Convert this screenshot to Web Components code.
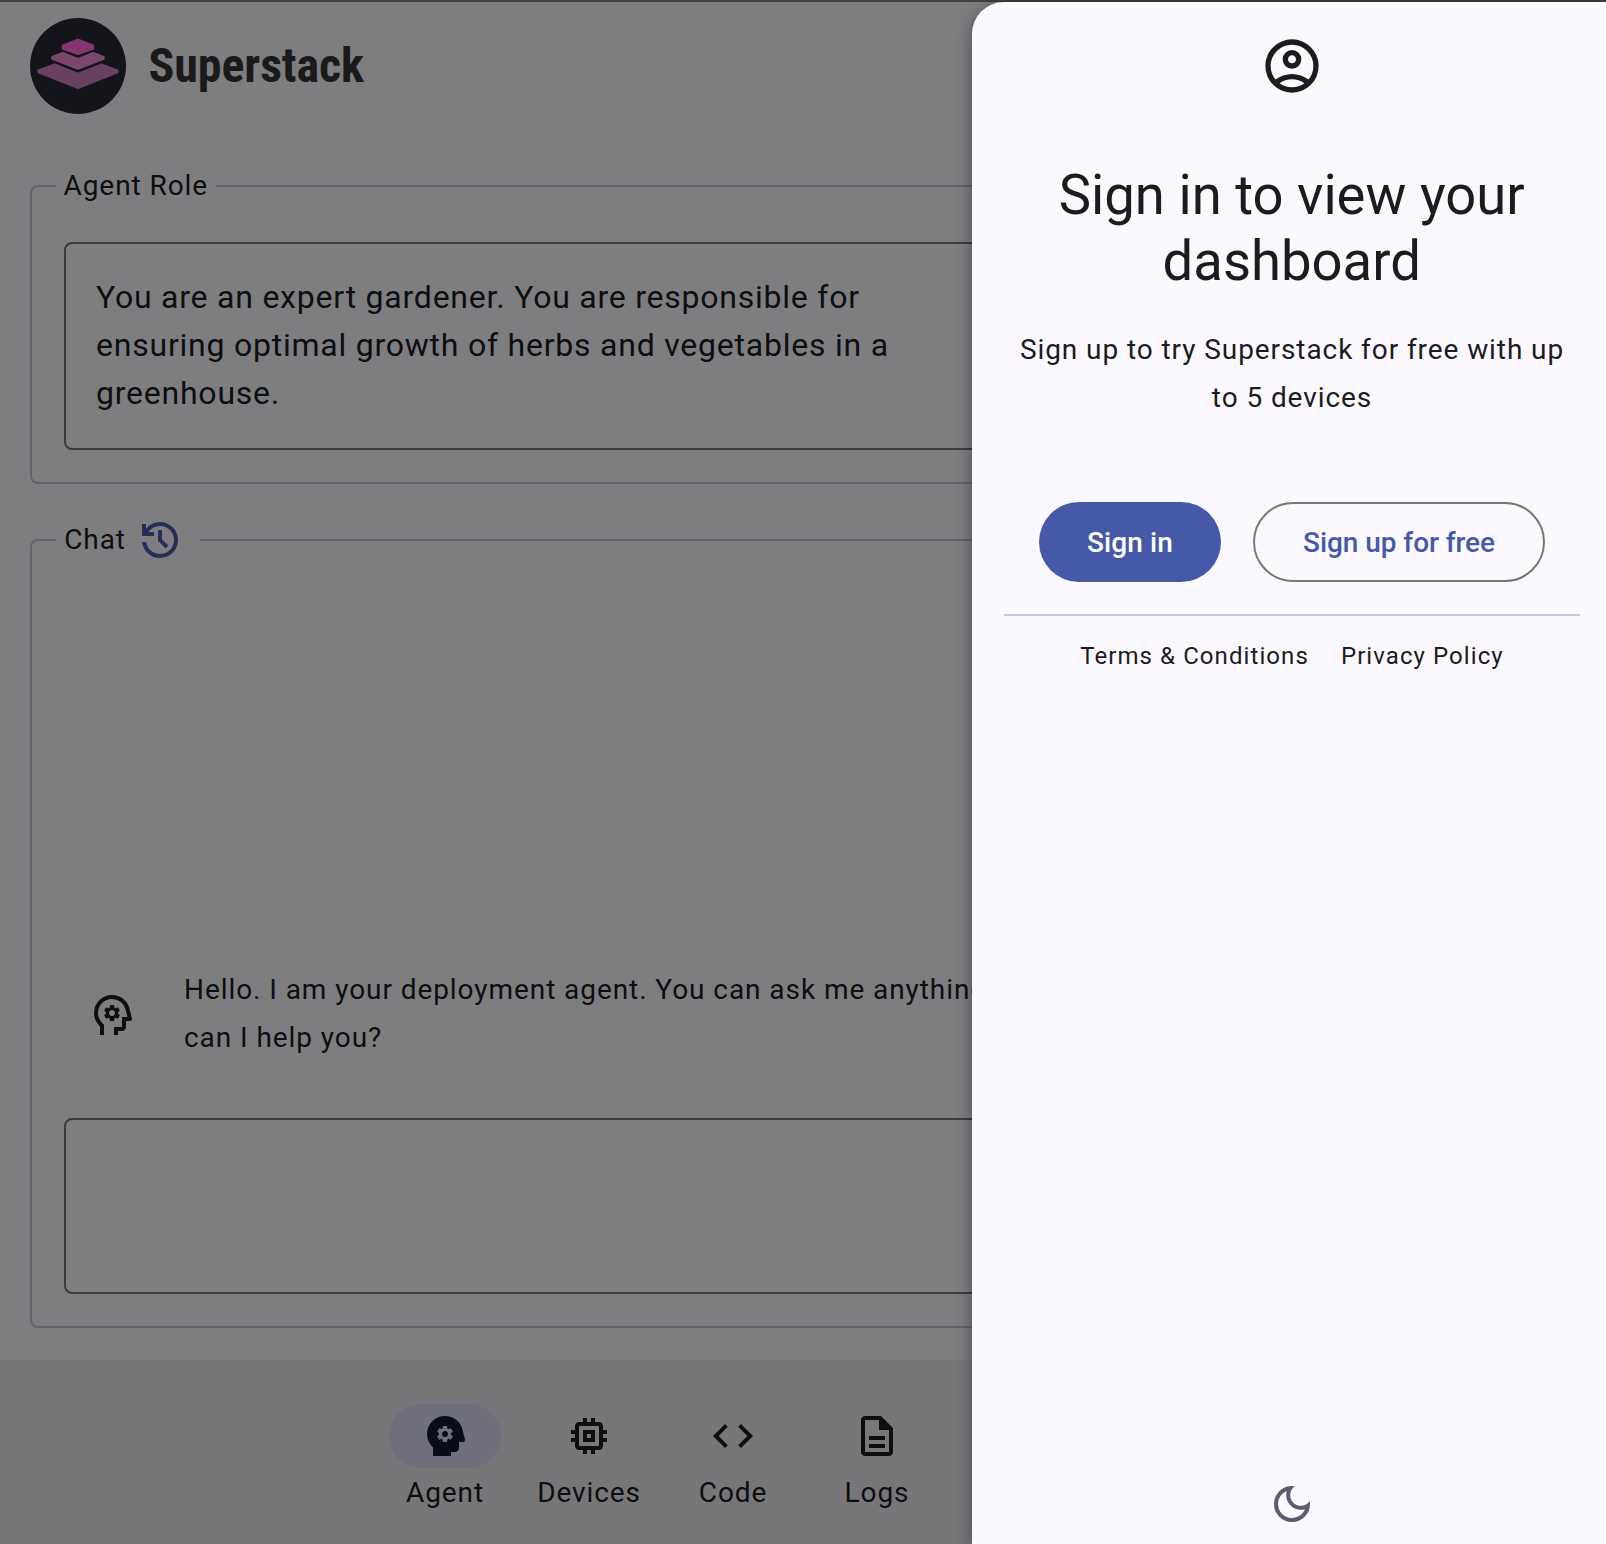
<!DOCTYPE html>
<html lang="en">
<head>
<meta charset="utf-8">
<title>Superstack</title>
<style>
html, body { margin: 0; height: 100%; overflow: hidden; }
body { font-family: Roboto, "Liberation Sans", sans-serif; color: #0d0e10; background: #7e7e80; }
</style>
</head>
<body>
<ss-app>
  <ss-header slot="top">Superstack</ss-header>
  <ss-group slot="main"><span slot="title">Agent Role</span><ss-field style="--h:208px">You are an expert gardener. You are responsible for<br>ensuring optimal growth of herbs and vegetables in a<br>greenhouse.</ss-field></ss-group>
  <ss-group slot="main" tall><span slot="title">Chat</span><ss-icon slot="action" name="history"></ss-icon><ss-message>Hello. I am your deployment agent. You can ask me anything. How<br>can I help you?</ss-message><ss-field style="--h:176px"></ss-field></ss-group>
  <ss-nav slot="bottom">
    <ss-nav-item icon="agentFill" active>Agent</ss-nav-item>
    <ss-nav-item icon="memory">Devices</ss-nav-item>
    <ss-nav-item icon="code">Code</ss-nav-item>
    <ss-nav-item icon="doc">Logs</ss-nav-item>
  </ss-nav>
  <ss-drawer slot="drawer">
    <span slot="heading">Sign in to view your<br>dashboard</span>
    <span slot="text">Sign up to try Superstack for free with up<br>to 5 devices</span>
    <ss-button slot="actions" filled>Sign in</ss-button>
    <ss-button slot="actions">Sign up for free</ss-button>
    <ss-link slot="links">Terms &amp; Conditions</ss-link>
    <ss-link slot="links">Privacy Policy</ss-link>
  </ss-drawer>
</ss-app>
<script>
const GEAR = 'M440-360h80l6-50q8-3 14.5-7t11.5-9l46 20 40-68-40-30q2-8 2-16t-2-16l40-30-40-68-46 20q-5-5-11.5-9t-14.5-7l-6-50h-80l-6 50q-8 3-14.5 7t-11.5 9l-46-20-40 68 40 30q-2 8-2 16t2 16l-40 30 40 68 46-20q5 5 11.5 9t14.5 7l6 50Zm40-100q-25 0-42.5-17.5T420-520q0-25 17.5-42.5T480-580q25 0 42.5 17.5T540-520q0 25-17.5 42.5T480-460Z';
const HEAD = 'M240-80v-172q-57-52-88.5-121.5T120-520q0-150 105-255t255-105q125 0 221.5 73.5T827-615l52 205q5 19-7 34.5T840-360h-80v120q0 33-23.5 56.5T680-160h-80v80';
const ICONS = {
  account: 'M234-276q51-39 114-61.5T480-360q69 0 132 22.5T726-276q35-41 54.5-93T800-480q0-133-93.5-226.5T480-800q-133 0-226.5 93.5T160-480q0 59 19.5 111t54.5 93Zm246-164q-59 0-99.5-40.5T340-580q0-59 40.5-99.5T480-720q59 0 99.5 40.5T620-580q0 59-40.5 99.5T480-440Zm0 360q-83 0-156-31.5T197-197q-54-54-85.5-127T80-480q0-83 31.5-156T197-763q54-54 127-85.5T480-880q83 0 156 31.5T763-763q54 54 85.5 127T880-480q0 83-31.5 156T763-197q-54 54-127 85.5T480-80Zm0-80q53 0 100-15.5t86-44.5q-39-29-86-44.5T480-280q-53 0-100 15.5T294-220q39 29 86 44.5T480-160Zm0-360q26 0 43-17t17-43q0-26-17-43t-43-17q-26 0-43 17t-17 43q0 26 17 43t43 17Z',
  history: 'M480-120q-138 0-240.5-91.5T122-440h82q14 104 92.5 172T480-200q117 0 198.5-81.5T760-480q0-117-81.5-198.5T480-760q-69 0-129 32t-101 88h110v80H120v-240h80v94q51-64 124.5-99T480-840q75 0 140.5 28.5t114 77q48.5 48.5 77 114T840-480q0 75-28.5 140.5t-77 114q-48.5 48.5-114 77T480-120Zm112-192L440-464v-216h80v184l128 128-56 56Z',
  agent: HEAD + 'h-80v-160h160v-200h108l-38-155q-23-91-98-148t-172-57q-116 0-198 81t-82 197q0 60 24.5 114t69.5 96l26 24v208h-80Z' + GEAR,
  agentFill: HEAD + 'H240Z' + GEAR,
  memory: 'M360-360v-240h240v240H360Zm80-80h80v-80h-80v80Zm-80 320v-80h-80q-33 0-56.5-23.5T200-280v-80h-80v-80h80v-80h-80v-80h80v-80q0-33 23.5-56.5T280-760h80v-80h80v80h80v-80h80v80h80q33 0 56.5 23.5T760-680v80h80v80h-80v80h80v80h-80v80q0 33-23.5 56.5T680-200h-80v80h-80v-80h-80v80h-80Zm320-160v-400H280v400h400Z',
  code: 'M320-240 80-480l240-240 57 57-184 184 183 183-56 56Zm320 0-57-57 184-184-183-183 56-56 240 240-240 240Z',
  doc: 'M320-240h320v-80H320v80Zm0-160h320v-80H320v80ZM240-80q-33 0-56.5-23.5T160-160v-640q0-33 23.5-56.5T240-880h320l240 240v480q0 33-23.5 56.5T720-80H240Zm280-520v-200H240v640h480v-440H520Z',
  moon: 'M480-120q-150 0-255-105T120-480q0-150 105-255t255-105q14 0 27.5 1t26.5 3q-41 29-65.5 75.5T444-660q0 90 63 153t153 63q55 0 101-24.5t75-65.5q2 13 3 26.5t1 27.5q0 150-105 255T480-120Zm0-80q88 0 158-48.5T740-375q-20 5-40 8t-40 3q-123 0-209.5-86.5T364-660q0-20 3-40t8-40q-78 32-126.5 102T200-480q0 116 82 198t198 82Z'
};

const define = (name, render) => customElements.define(name, class extends HTMLElement {
  connectedCallback() {
    if (this.shadowRoot) return;
    this.attachShadow({ mode: 'open' }).innerHTML = render(this);
  }
});

define('ss-icon', el => `<style>
:host { display: block; flex: none; width: var(--size, 48px); height: var(--size, 48px); }
svg { display: block; width: 100%; height: 100%; fill: currentColor; }
</style><svg viewBox="0 -960 960 960"><path fill-rule="evenodd" d="${ICONS[el.getAttribute('name')]}"/></svg>`);

define('ss-app', () => `<style>
:host { display: block; position: relative; width: 1612px; height: 1544px; }
.page { display: flex; flex-direction: column; height: 100%; box-sizing: border-box; border-top: 2px solid #3f403a; }
main { flex: 1; display: flex; flex-direction: column; gap: 32px; padding: 48px 30px 32px; }
</style><div class="page"><slot name="top"></slot><main><slot name="main"></slot></main><slot name="bottom"></slot></div><slot name="drawer"></slot>`);

define('ss-header', () => `<style>
:host { display: flex; align-items: center; gap: 22.5px; padding: 16px 30px 0; color: #1a1a1b;
  font: 700 48px/96px "Roboto Condensed", Roboto, sans-serif; letter-spacing: -0.1px; }
svg { display: block; width: 96px; height: 96px; }
h1 { font: inherit; margin: 0; }
</style>
<svg viewBox="0 0 96 96"><circle cx="48" cy="48" r="48" fill="#14151b"/>
<g stroke-width="3" stroke-linejoin="round">
<path fill="#853672" stroke="#853672" d="M48 22.2 62.7 27.8V30.4L48 35.6 33.3 30.4V27.8Z"/>
<path fill="#7a476f" stroke="#7a476f" stroke-width="2" d="M32.6 34.9 48 41 63.4 34.9 73.7 38.9V40.7L48 50.8 22.3 40.7V38.9Z"/>
<path fill="#6a4061" stroke="#6a4061" stroke-width="2" d="M24.6 46.4 48 55.6 71.4 46.4 87.6 52.4V54.2L48 70 8.4 54.2V52.4Z"/>
</g></svg><h1><slot></slot></h1>`);

define('ss-group', () => `<style>
:host { display: block; height: 322px; font-size: 28px; line-height: 48px; letter-spacing: 0.93px; }
:host([tall]) { height: 812px; }
fieldset { box-sizing: border-box; height: 100%; margin: 0; padding: 32px; border: 2px solid #64636b; border-radius: 8px; min-width: 0; }
legend { display: flex; align-items: center; gap: 10px; height: 48px; margin-left: -8px; padding: 0 7.5px 0 7.5px; }
:host([tall]) legend { padding: 0 16px 0 8.2px; }
::slotted(ss-icon) { color: #242e59; }
.body { height: 100%; display: flex; flex-direction: column; justify-content: flex-end; }
</style><fieldset><legend><slot name="title"></slot><slot name="action"></slot></legend><div class="body"><slot></slot></div></fieldset>`);

define('ss-field', () => `<style>
:host { display: block; box-sizing: border-box; flex: none; height: var(--h); padding: 29px 30px; white-space: nowrap;
  border: 2px solid #3b3b3d; border-radius: 8px; font-size: 32px; line-height: 48px; letter-spacing: 0.77px; }
</style><slot></slot>`);

define('ss-message', () => `<style>
:host { display: flex; align-items: center; gap: 48px; padding: 0 24px; margin-bottom: 56px; white-space: nowrap; letter-spacing: 0.93px; }
ss-icon { position: relative; top: 1px; }
</style><ss-icon name="agent"></ss-icon><div><slot></slot></div>`);

define('ss-nav', () => `<style>
:host { display: flex; box-sizing: border-box; flex: none; height: 184px; padding: 44px 0 0 373px; background: #777779; }
</style><slot></slot>`);

define('ss-nav-item', el => `<style>
:host { display: flex; flex-direction: column; align-items: center; width: 144px; font-size: 28px; line-height: 50px; letter-spacing: 0.9px; }
.pill { display: flex; align-items: center; justify-content: center; width: 112px; height: 64px; border-radius: 32px; }
:host([active]) .pill { background: #706f7c; color: #0a0c18; }
</style><div class="pill"><ss-icon name="${el.getAttribute('icon')}"></ss-icon></div><span><slot></slot></span>`);

define('ss-drawer', () => `<style>
:host { position: absolute; left: 972px; top: 2px; width: 640px; height: 1542px; box-sizing: border-box; padding: 32px 32px 16px;
  display: flex; flex-direction: column; align-items: center; text-align: center; background: #fbf9ff; color: #1b1b21;
  border-radius: 32px 0 0 0; box-shadow: 0 4px 16px rgba(0,0,0,.42); }
ss-icon.user { --size: 64px; }
h2 { margin: 64px 0 0; font-weight: 400; font-size: 56px; line-height: 66px; transform: scaleX(.972); }
p { margin: 32px 0 0; font-size: 28px; line-height: 48px; letter-spacing: 0.92px; }
.actions { display: flex; gap: 32px; margin-top: 80px; }
hr { width: 100%; margin: 32px 0 16px; border: 0; height: 2px; background: #c7c5d0; }
nav { display: flex; gap: 32px; }
.moon { margin-top: auto; color: #5b5d72; }
</style><ss-icon class="user" name="account"></ss-icon><h2><slot name="heading"></slot></h2><p><slot name="text"></slot></p>
<div class="actions"><slot name="actions"></slot></div><hr><nav><slot name="links"></slot></nav><ss-icon class="moon" name="moon"></ss-icon>`);

define('ss-button', () => `<style>
:host { display: flex; align-items: center; justify-content: center; box-sizing: border-box; width: 292px; height: 80px; padding-top: 2px;
  border: 2px solid #76767f; border-radius: 40px; color: #4659a9; font-size: 28px; font-weight: 500; line-height: 40px; white-space: nowrap; letter-spacing: -0.06px; }
:host([filled]) { width: 182px; border: 0; background: #4659a9; color: #fff; letter-spacing: 0.1px; }
</style><slot></slot>`);

define('ss-link', () => `<style>:host { display: block; font-size: 24px; line-height: 48px; letter-spacing: 1.08px; }</style><slot></slot>`);
</script>
</body>
</html>
